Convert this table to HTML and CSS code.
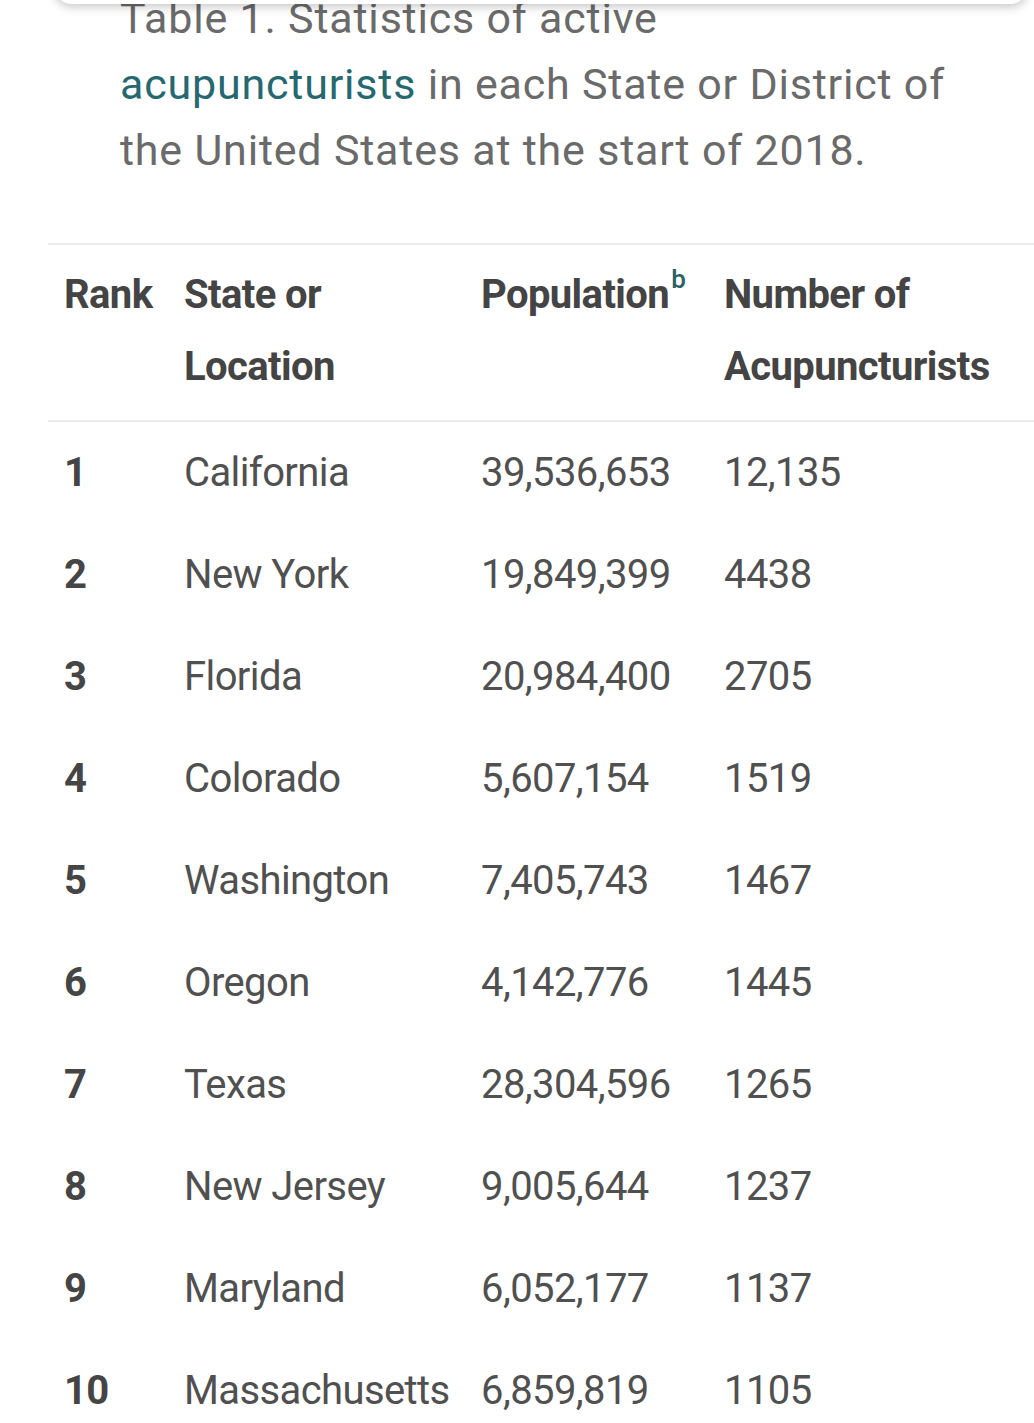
FILE: index.html
```html
<!DOCTYPE html>
<html lang="en">
<head>
<meta charset="utf-8">
<title>Table 1</title>
<link rel="stylesheet" href="styles.css">
</head>
<body>
<div class="card"></div>
<p class="caption">Table 1. Statistics of active <a class="link" href="#">acupuncturists</a> in each State or District of the United States at the start of 2018.</p>
<table class="stats">
  <colgroup>
    <col class="c-rank">
    <col class="c-state">
    <col class="c-pop">
    <col class="c-num">
  </colgroup>
  <thead>
    <tr>
      <th>Rank</th>
      <th>State or Location</th>
      <th>Population<sup class="fn">b</sup></th>
      <th>Number of Acupuncturists</th>
    </tr>
  </thead>
  <tbody>
    <tr><td class="rank">1</td><td>California</td><td>39,536,653</td><td>12,135</td></tr>
    <tr><td class="rank">2</td><td>New York</td><td>19,849,399</td><td>4438</td></tr>
    <tr><td class="rank">3</td><td>Florida</td><td>20,984,400</td><td>2705</td></tr>
    <tr><td class="rank">4</td><td>Colorado</td><td>5,607,154</td><td>1519</td></tr>
    <tr><td class="rank">5</td><td>Washington</td><td>7,405,743</td><td>1467</td></tr>
    <tr><td class="rank">6</td><td>Oregon</td><td>4,142,776</td><td>1445</td></tr>
    <tr><td class="rank">7</td><td>Texas</td><td>28,304,596</td><td>1265</td></tr>
    <tr><td class="rank">8</td><td>New Jersey</td><td>9,005,644</td><td>1237</td></tr>
    <tr><td class="rank">9</td><td>Maryland</td><td>6,052,177</td><td>1137</td></tr>
    <tr><td class="rank">10</td><td>Massachusetts</td><td>6,859,819</td><td>1105</td></tr>
  </tbody>
</table>
</body>
</html>
```

FILE: styles.css
```css
html, body {
  margin: 0;
  padding: 0;
  background: #ffffff;
}
body {
  font-family: Roboto, "Liberation Sans", sans-serif;
  color: #4a4a4a;
  overflow: hidden;
  position: relative;
}
.card {
  position: absolute;
  top: -30px;
  left: 54px;
  right: 6px;
  height: 34px;
  background: #ffffff;
  border-radius: 0 0 18px 18px;
  box-shadow: 0 3px 10px rgba(0, 0, 0, 0.22);
  z-index: 2;
}
.caption {
  width: 845px;
  margin: -15px 0 0 120px;
  font-size: 43px;
  letter-spacing: 0.8px;
  line-height: 66px;
  color: #6a6a6a;
}
.link {
  color: #26686f;
  text-decoration: none;
}
.stats {
  margin: 60px 0 0 48px;
  width: 1000px;
  border-collapse: collapse;
  table-layout: fixed;
  font-size: 40px;
  letter-spacing: -0.6px;
}
.c-rank { width: 120px; }
.c-state { width: 297px; }
.c-pop { width: 243px; }
.stats thead tr {
  border-top: 2px solid #ececec;
  border-bottom: 2px solid #ececec;
}
.stats th {
  text-align: left;
  font-weight: 700;
  line-height: 72px;
  padding: 14px 0 17px 16px;
  vertical-align: top;
  color: #444444;
}
.fn {
  font-size: 26px;
  line-height: 0;
  color: #2d5f66;
  vertical-align: 20px;
  font-weight: 500;
  letter-spacing: 0;
  margin-left: 2px;
}
.stats td {
  height: 102px;
  padding: 0 0 0 16px;
  line-height: 44px;
  vertical-align: middle;
  white-space: nowrap;
  color: #505050;
}
.stats td.rank {
  font-weight: 700;
  color: #454545;
}
```
